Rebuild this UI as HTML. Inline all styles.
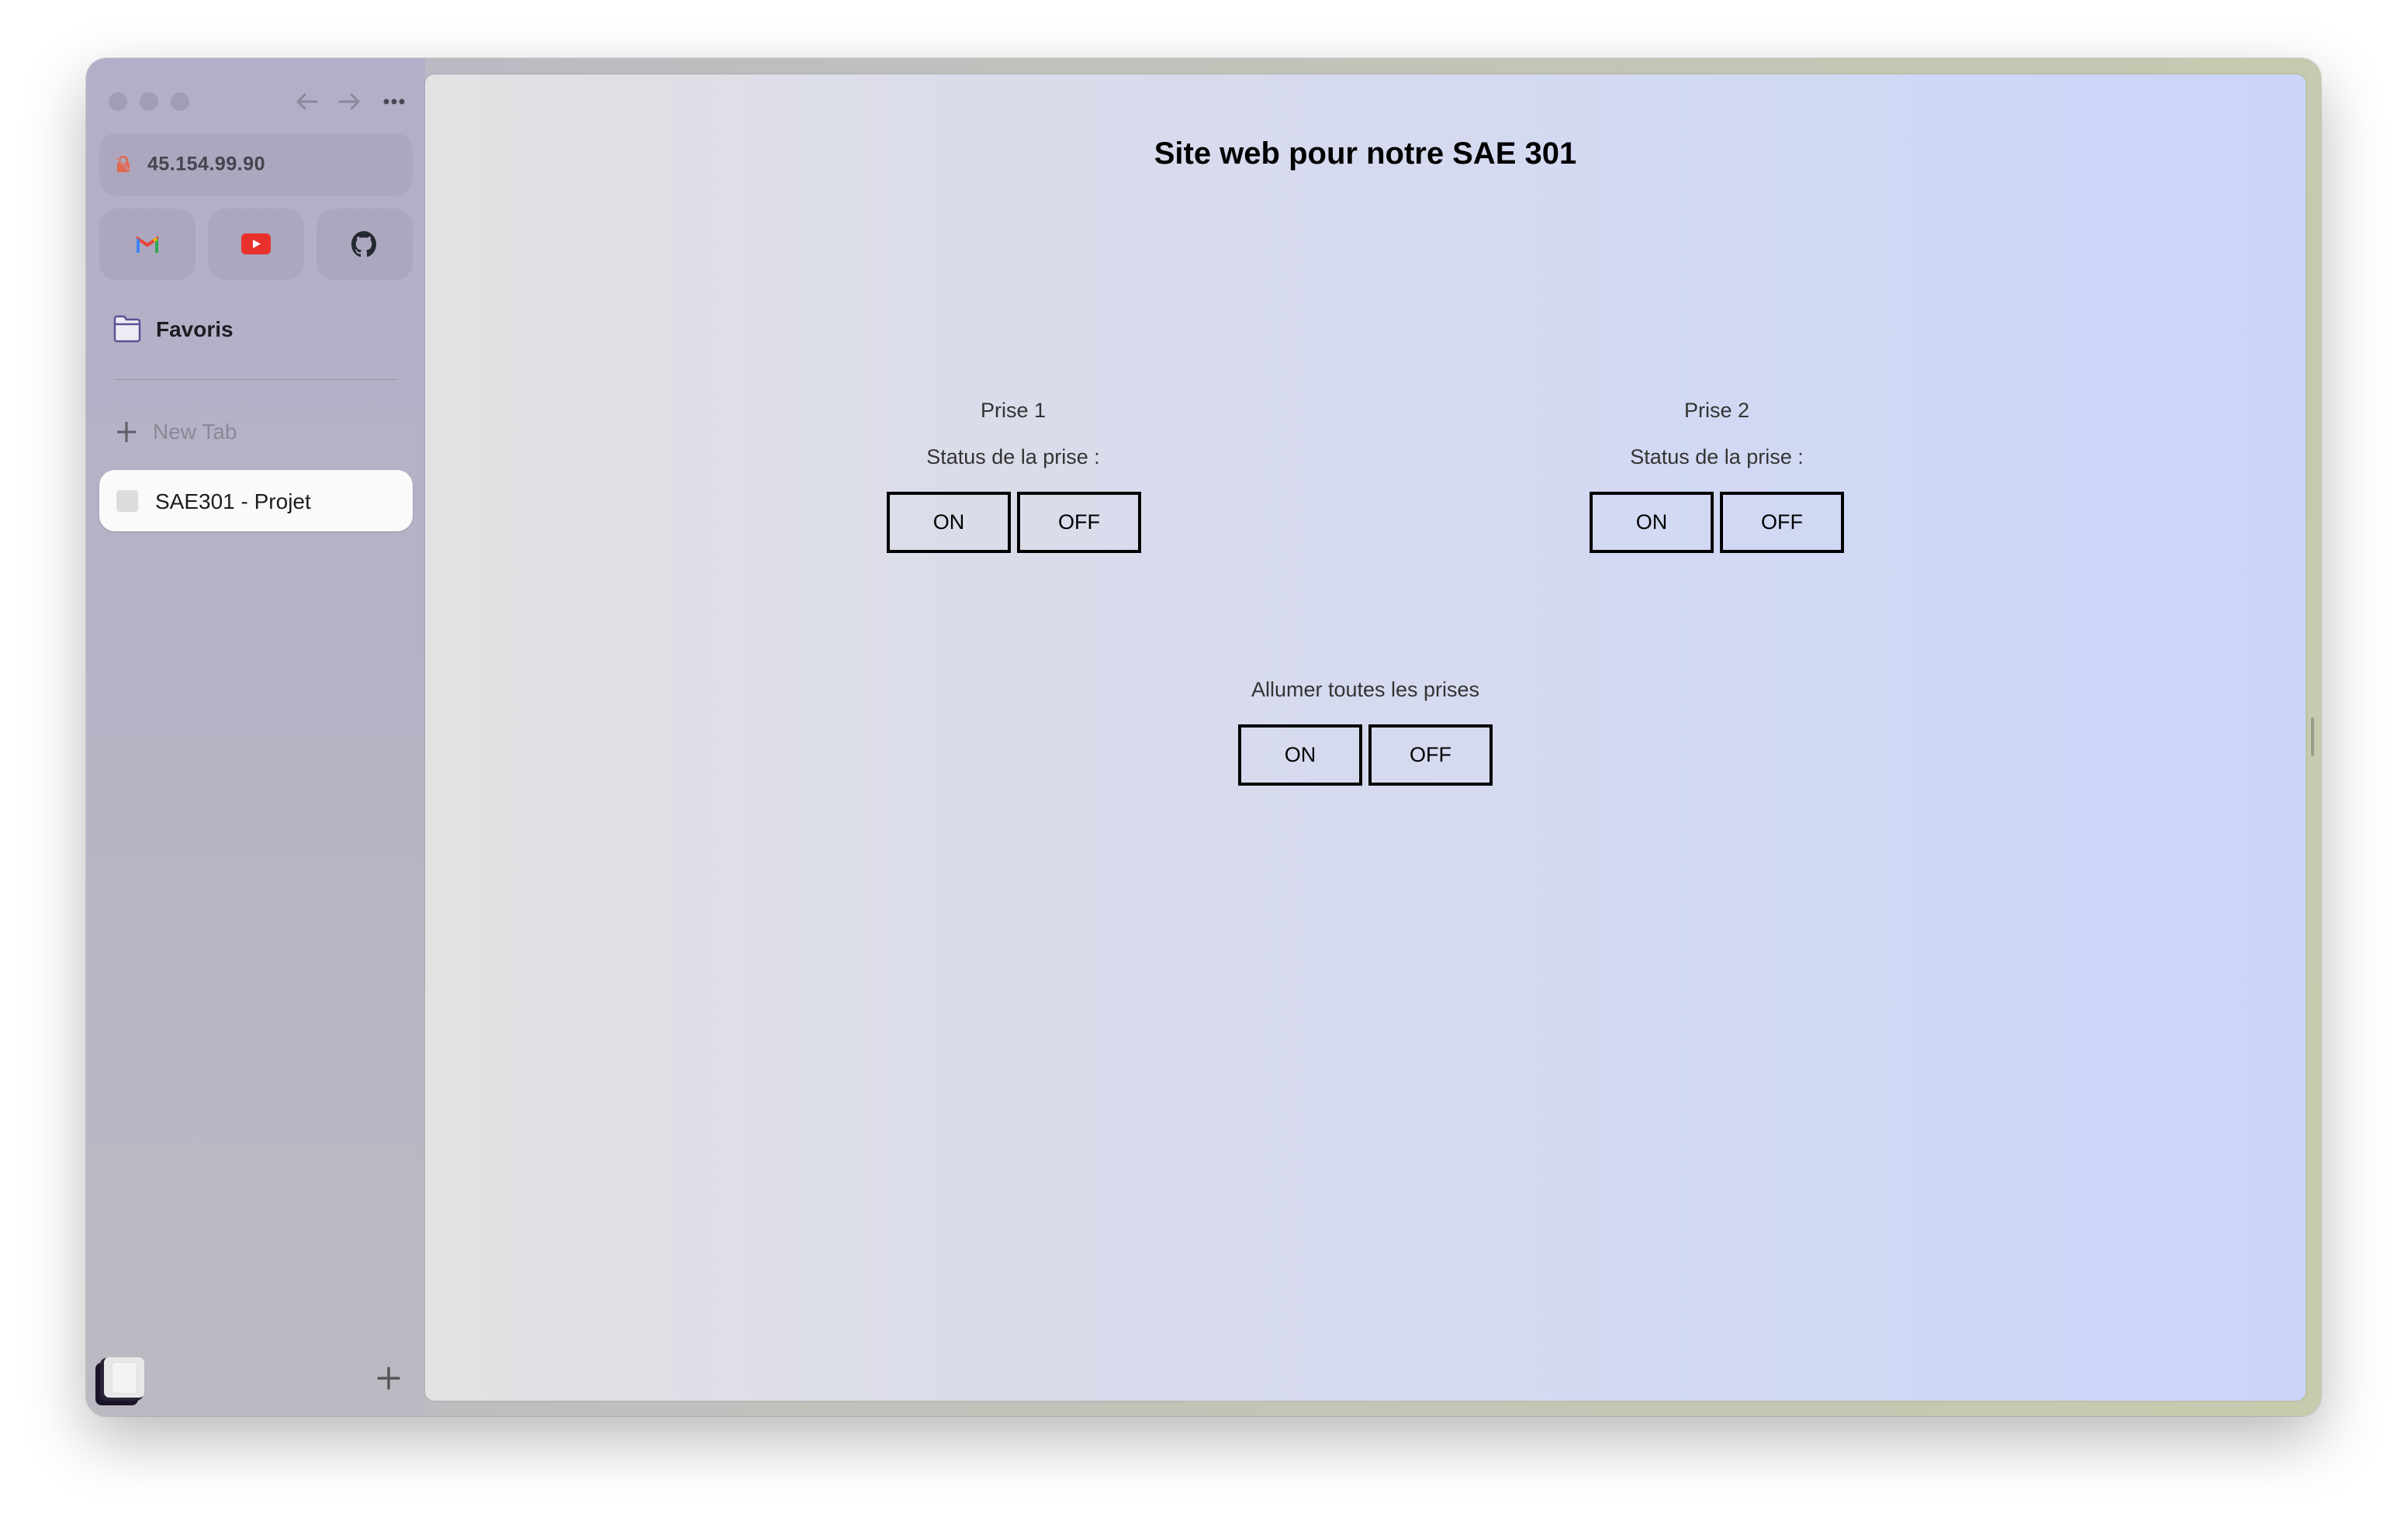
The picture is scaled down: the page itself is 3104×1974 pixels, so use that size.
<!DOCTYPE html>
<html><head><meta charset="utf-8"><style>
*{margin:0;padding:0;box-sizing:border-box}
body{width:3104px;height:1974px;background:#fff;position:relative;overflow:hidden;font-family:"Liberation Sans",Arial,sans-serif}
.win{position:absolute;left:111px;top:75px;width:2881px;height:1751px;border-radius:26px;background:linear-gradient(100deg,#b3aec9 0%,#bab8c4 10%,#c0c2bc 40%,#c6cbad 100%);box-shadow:0 30px 80px rgba(0,0,0,.28),0 0 0 1px rgba(0,0,0,.12)}
.side{position:absolute;left:111px;top:75px;width:437px;height:1751px;border-radius:26px 0 0 26px;background:linear-gradient(180deg,#b4aec9 0%,#b6b2c6 40%,#bbbac2 100%)}
.content{position:absolute;left:548px;top:96px;width:2424px;height:1710px;border-radius:12px;background:linear-gradient(90deg,#e2e2e3 0%,#dadcea 30%,#d3d9f2 65%,#cad5f9 100%);box-shadow:0 0 3px rgba(0,0,0,.15)}
.abs{position:absolute}
.dot{position:absolute;top:119px;width:24px;height:24px;border-radius:50%;background:#a29db4}
.pill{position:absolute;background:rgba(150,145,165,.28);border-radius:22px}
.txt{position:absolute;white-space:nowrap;transform:translateY(-50%)}
.btn{position:absolute;width:160px;height:79px;border:4px solid #000;display:flex;align-items:center;justify-content:center;font-size:27px;color:#000}
.lbl{position:absolute;font-size:27px;color:#333;transform:translateX(-50%);white-space:nowrap}
</style></head><body>
<div class="win"></div>
<div class="side"></div>
<div class="dot" style="left:140px"></div><div class="dot" style="left:180px"></div><div class="dot" style="left:220px"></div>
<svg class="abs" style="left:380px;top:118px" width="150" height="26" viewBox="0 0 150 26"><g stroke="#8d879a" stroke-width="3" fill="none" stroke-linecap="round"><path d="M4 13H28M4 13L13 4M4 13L13 22"/><path d="M58 13H82M82 13L73 4M82 13L73 22"/></g><g fill="#4a4655"><circle cx="118" cy="13" r="3.5"/><circle cx="128" cy="13" r="3.5"/><circle cx="138" cy="13" r="3.5"/></g></svg>
<div class="pill" style="left:128px;top:172px;width:404px;height:80px"></div>
<svg class="abs" style="left:148px;top:201px" width="22" height="22" viewBox="0 0 22 22"><rect x="3" y="9" width="16" height="12" rx="2" fill="#e0684f"/><path d="M6 9V6a5 5 0 0110 0v3" stroke="#e0684f" stroke-width="2.5" fill="none"/><path d="M1 1L21 21" stroke="#b6b2c6" stroke-width="3"/><path d="M2 2L20 20" stroke="#e0684f" stroke-width="1.5"/></svg>
<div class="txt" style="left:190px;top:212px;font-size:25px;color:#47434f;font-weight:bold;letter-spacing:.5px">45.154.99.90</div>
<div class="pill" style="left:128px;top:269px;width:124px;height:92px"></div>
<div class="pill" style="left:268px;top:269px;width:124px;height:92px"></div>
<div class="pill" style="left:408px;top:269px;width:124px;height:92px"></div>
<svg class="abs" style="left:176px;top:304px" width="28" height="22" viewBox="0 0 28 22"><path d="M2 22V4L14 12L26 4V22" fill="none" stroke="#e84335" stroke-width="4"/><path d="M2 22V4" stroke="#4285f4" stroke-width="4"/><path d="M26 22V4" stroke="#34a853" stroke-width="4"/><path d="M22 6L26 4" stroke="#fbbc04" stroke-width="4"/></svg>
<svg class="abs" style="left:311px;top:301px" width="38" height="27" viewBox="0 0 38 27"><rect width="38" height="27" rx="6" fill="#e8312c"/><path d="M15 8L25 13.5L15 19Z" fill="#fff"/></svg>
<svg class="abs" style="left:453px;top:298px" width="32" height="34" viewBox="0 0 16 16" preserveAspectRatio="none"><path fill="#24292f" d="M8 0C3.58 0 0 3.58 0 8c0 3.540 2.29 6.53 5.47 7.59.4.07.55-.17.55-.38 0-.19-.01-.82-.01-1.49-2.010.37-2.53-.49-2.69-.94-.09-.23-.48-.94-.82-1.130-.28-.15-.68-.52-.01-.53.63-.01 1.080.58 1.230.82.72 1.21 1.870.87 2.330.66.07-.52.28-.87.51-1.07-1.78-.2-3.64-.89-3.64-3.95 0-.87.31-1.59.82-2.15-.08-.2-.36-1.020.08-2.12 0 0 .67-.21 2.2.82.64-.18 1.32-.27 2-.27.68 0 1.36.09 2 .27 1.53-1.04 2.2-.82 2.2-.82.44 1.1.16 1.92.08 2.12.51.56.82 1.27.82 2.15 0 3.07-1.87 3.75-3.65 3.95.29.25.54.73.54 1.48 0 1.07-.01 1.93-.01 2.2 0 .21.15.46.55.38A8.013 8.013 0 0016 8c0-4.42-3.58-8-8-8z"/></svg>
<svg class="abs" style="left:146px;top:406px" width="36" height="36" viewBox="0 0 36 36"><path d="M2 5a3 3 0 013-3h9l3 4h14a3 3 0 013 3v22a3 3 0 01-3 3H5a3 3 0 01-3-3z" fill="#eeedf6" stroke="#5e4f96" stroke-width="2.5"/><path d="M2 12H34" stroke="#5e4f96" stroke-width="2.5"/></svg>
<div class="txt" style="left:201px;top:425px;font-size:28px;font-weight:bold;color:#1e1c22">Favoris</div>
<div class="abs" style="left:148px;top:489px;width:364px;height:1px;background:#99949f"></div>
<svg class="abs" style="left:150px;top:543px" width="26" height="28" viewBox="0 0 26 28"><path d="M13 1V27M1 14H25" stroke="#5e5a66" stroke-width="3"/></svg>
<div class="txt" style="left:197px;top:557px;font-size:28px;color:#8c8894">New Tab</div>
<div class="abs" style="left:128px;top:606px;width:404px;height:79px;background:#fafafa;border-radius:20px;box-shadow:0 1px 3px rgba(0,0,0,.12)"></div>
<div class="abs" style="left:150px;top:632px;width:28px;height:28px;background:#dcdcdc;border-radius:4px"></div>
<div class="txt" style="left:200px;top:647px;font-size:28px;color:#1d1c20">SAE301 - Projet</div>
<div class="abs" style="left:123px;top:1757px;width:55px;height:55px;border-radius:8px;background:#1b1427"></div>
<div class="abs" style="left:129px;top:1751px;width:55px;height:55px;border-radius:8px;background:#2a2236"></div>
<div class="abs" style="left:134px;top:1750px;width:52px;height:52px;border-radius:7px;background:#e8e8ea"></div>
<div class="abs" style="left:145px;top:1757px;width:31px;height:39px;border-radius:3px;background:#f3f3f3;box-shadow:0 0 1px #aaa"></div>
<svg class="abs" style="left:486px;top:1762px" width="30" height="30" viewBox="0 0 30 30"><path d="M15 2V28M2 15H28" stroke="#555" stroke-width="3.5" stroke-linecap="round"/></svg>
<div class="content"></div>
<div class="abs" style="left:2979px;top:925px;width:4px;height:50px;border-radius:2px;background:#999e8a"></div>
<div class="lbl" style="left:1760px;top:176px;font-size:40px;font-weight:bold;color:#000">Site web pour notre SAE 301</div>
<div class="lbl" style="left:1306px;top:514px">Prise 1</div>
<div class="lbl" style="left:1306px;top:574px">Status de la prise :</div>
<div class="btn" style="left:1143px;top:634px">ON</div>
<div class="btn" style="left:1311px;top:634px">OFF</div>
<div class="lbl" style="left:2213px;top:514px">Prise 2</div>
<div class="lbl" style="left:2213px;top:574px">Status de la prise :</div>
<div class="btn" style="left:2049px;top:634px">ON</div>
<div class="btn" style="left:2217px;top:634px">OFF</div>
<div class="lbl" style="left:1760px;top:874px">Allumer toutes les prises</div>
<div class="btn" style="left:1596px;top:934px">ON</div>
<div class="btn" style="left:1764px;top:934px">OFF</div>
</body></html>
